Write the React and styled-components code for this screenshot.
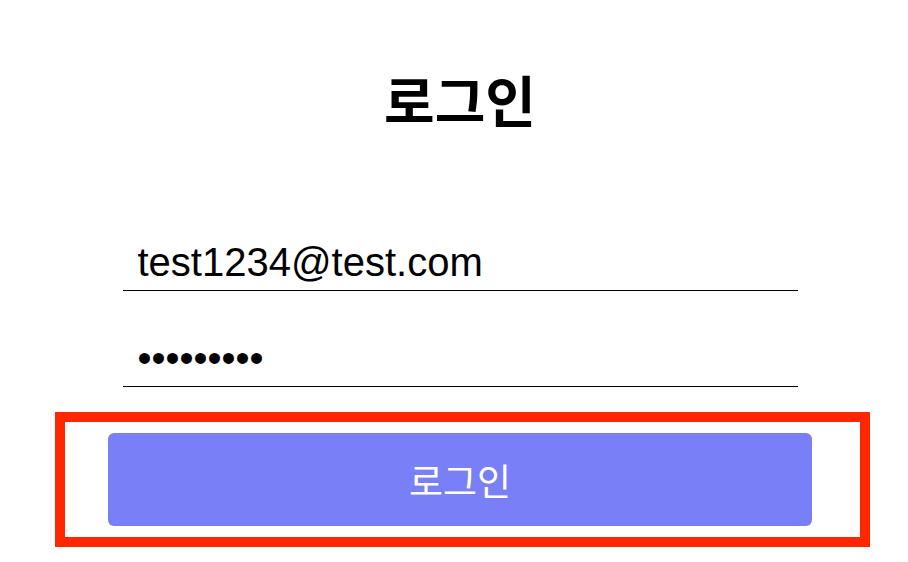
import React from 'react';
import styled, { createGlobalStyle } from 'styled-components';

const GlobalStyle = createGlobalStyle`
  html, body {
    margin: 0;
    padding: 0;
    background: #ffffff;
  }
  body {
    font-family: 'Liberation Sans', 'Noto Sans CJK KR', Arial, sans-serif;
    color: #000;
  }
`;

const Page = styled.div`
  display: flex;
  flex-direction: column;
  align-items: center;
  padding: 0 0 0 12px;
`;

const Title = styled.h1`
  margin: 62px 0 0;
  font-family: 'Noto Sans CJK KR', 'Liberation Sans', sans-serif;
  font-size: 55px;
  font-weight: 700;
  line-height: 72px;
  letter-spacing: 0;
`;

const Form = styled.form`
  display: flex;
  flex-direction: column;
  align-items: center;
  margin-top: 101px;
`;

const Field = styled.input`
  box-sizing: border-box;
  width: 675px;
  height: 56px;
  margin-bottom: ${p => p.$gap || 0}px;
  padding: 0 15px;
  border: none;
  border-bottom: 1px solid #000;
  outline: none;
  background: transparent;
  font-family: 'Liberation Sans', Arial, sans-serif;
  font-size: 40px;
  color: #000;
`;

const Highlight = styled.div`
  box-sizing: border-box;
  width: 815px;
  margin: 25px 0 0 5px;
  padding: 11px 48px 11px 43px;
  border: 10px solid #ff2600;
`;

const SubmitButton = styled.button`
  display: block;
  width: 704px;
  height: 93px;
  border: none;
  border-radius: 6px;
  background: #7980f7;
  color: #fff;
  font-family: 'Noto Sans CJK KR', 'Liberation Sans', sans-serif;
  font-size: 37px;
  font-weight: 400;
  cursor: pointer;
`;

export default function App() {
  return (
    <>
      <GlobalStyle />
      <Page>
        <Title>로그인</Title>
        <Form onSubmit={e => e.preventDefault()}>
          <Field type="email" defaultValue="test1234@test.com" $gap={40} />
          <Field type="password" defaultValue="test12345" />
          <Highlight>
            <SubmitButton type="submit">로그인</SubmitButton>
          </Highlight>
        </Form>
      </Page>
    </>
  );
}
